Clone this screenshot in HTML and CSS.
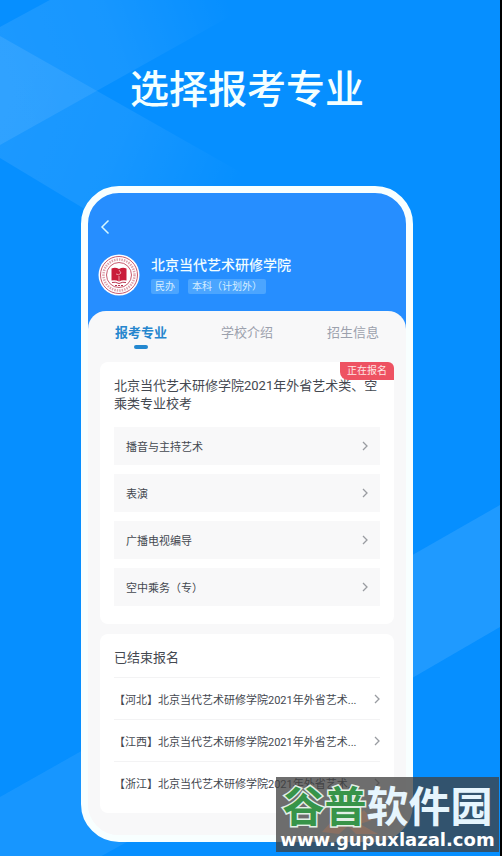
FILE: index.html
```html
<!DOCTYPE html>
<html lang="zh-CN">
<head>
<meta charset="utf-8">
<meta name="viewport" content="width=device-width, initial-scale=1">
<title>选择报考专业</title>
<link rel="stylesheet" href="styles.css">
</head>
<body>
<svg class="backdrop" viewBox="0 0 502 856" preserveAspectRatio="none" aria-hidden="true">
  <defs>
    <linearGradient id="up" gradientUnits="userSpaceOnUse" x1="0" y1="85" x2="230" y2="0"><stop offset="0" stop-color="#fff" stop-opacity=".09"/><stop offset=".5" stop-color="#fff" stop-opacity=".07"/><stop offset="1" stop-color="#fff" stop-opacity="0"/></linearGradient>
    <linearGradient id="down" gradientUnits="userSpaceOnUse" x1="0" y1="90" x2="240" y2="190"><stop offset="0" stop-color="#fff" stop-opacity=".09"/><stop offset=".5" stop-color="#fff" stop-opacity=".07"/><stop offset="1" stop-color="#fff" stop-opacity="0"/></linearGradient>
  </defs>
  <path fill="url(#up)" d="M0 27 50 0H260L0 145Z"/>
  <path fill="url(#down)" d="M0 36 280 194V260H170L0 158Z"/>
  <path fill="#fff" fill-opacity=".07" d="M0 797 160 707V824L102 856H0Z"/>
  <path fill="#fff" fill-opacity=".1" d="M502 505 400 563V686L502 627Z"/>
</svg>
<main class="poster">
  <h1 class="headline">选择报考专业</h1>
  <div class="phone">
    <header class="hero">
      <button class="back" type="button" aria-label="返回"><svg viewBox="0 0 10 16"><path d="M8.500 1.500 2 8l6.500 6.500"/></svg></button>
      <div class="school">
        <svg class="seal" viewBox="0 0 42 42" aria-hidden="true">
          <circle cx="21" cy="21" r="20.500" fill="#fff"/>
          <circle cx="21" cy="21" r="18.500" fill="none" stroke="#c85b70" stroke-width="1"/>
          <circle cx="21" cy="21" r="15.500" fill="none" stroke="#dfa3ae" stroke-width="2.500" stroke-dasharray="1.500 1"/>
          <circle cx="21" cy="21" r="12.500" fill="none" stroke="#c85b70" stroke-width="1"/>
          <path fill="#c91d3a" d="M13.500 14.500q4-1.500 7.500.5 3.500-2 7.500-.5v12q-4-1-7.500 1-3.500-2-7.500-1Z"/>
          <path fill="none" stroke="#f3b9c2" stroke-width=".8" d="M21 22v5M18 20q3 2 5-1l-2-3"/>
          <path fill="none" stroke="#b93450" stroke-width="1" d="M14 28.500q3-1 7 1 4-2 7-1M17 31.500h2m1 0h2m1 0h2"/>
        </svg>
        <div>
          <h2 class="school-name">北京当代艺术研修学院</h2>
          <div class="tags"><span class="tag">民办</span><span class="tag">本科（计划外）</span></div>
        </div>
      </div>
    </header>
    <div class="sheet">
      <nav class="tabs">
        <a class="tab active" href="#majors">报考专业</a>
        <a class="tab" href="#intro">学校介绍</a>
        <a class="tab" href="#info">招生信息</a>
      </nav>
      <section class="card" id="majors">
        <span class="status">正在报名</span>
        <h3 class="title">北京当代艺术研修学院2021年外省艺术类、空乘类专业校考</h3>
        <div class="majors">
          <button class="major" type="button">播音与主持艺术<svg class="chevron" viewBox="0 0 6 10"><path d="m1 1 4 4-4 4"/></svg></button>
          <button class="major" type="button">表演<svg class="chevron" viewBox="0 0 6 10"><path d="m1 1 4 4-4 4"/></svg></button>
          <button class="major" type="button">广播电视编导<svg class="chevron" viewBox="0 0 6 10"><path d="m1 1 4 4-4 4"/></svg></button>
          <button class="major" type="button">空中乘务（专）<svg class="chevron" viewBox="0 0 6 10"><path d="m1 1 4 4-4 4"/></svg></button>
        </div>
      </section>
      <section class="card ended">
        <h3 class="title">已结束报名</h3>
        <a class="row" href="#hebei"><span class="row-text">【河北】北京当代艺术研修学院2021年外省艺术...</span><svg class="chevron" viewBox="0 0 6 10"><path d="m1 1 4 4-4 4"/></svg></a>
        <a class="row" href="#jiangxi"><span class="row-text">【江西】北京当代艺术研修学院2021年外省艺术...</span><svg class="chevron" viewBox="0 0 6 10"><path d="m1 1 4 4-4 4"/></svg></a>
        <a class="row" href="#zhejiang"><span class="row-text">【浙江】北京当代艺术研修学院2021年外省艺术...</span><svg class="chevron" viewBox="0 0 6 10"><path d="m1 1 4 4-4 4"/></svg></a>
      </section>
    </div>
  </div>
</main>
<aside class="watermark">
  <svg class="watermark-mark" viewBox="0 0 80 36" aria-hidden="true"><path d="M0 30 18 10l12 9L42 8l8 10-12 4 18 10H34l-8-8-9 8Z"/></svg>
  <strong class="brand"><span class="brand-green">谷普</span>软件园</strong>
  <span class="site">www.gupuxlazal.com</span>
</aside>
</body>
</html>
```
FILE: styles.css
```css
* { box-sizing: border-box; }
body {
  position: relative;
  margin: 0;
  min-height: 100vh;
  overflow-x: hidden;
  background: #068fff;
  border-right: 2px solid #000;
  font-family: Roboto, "Noto Sans CJK SC", sans-serif;
  color: #444850;
}
h1, h2, h3 { margin: 0; font-weight: 400; }
button { border: 0; font: inherit; color: inherit; }
a { color: inherit; text-decoration: none; }
.backdrop { position: absolute; inset: 0; width: 100%; height: 100%; }
.poster { position: relative; padding: 60px 87px 14px 81px; }
.headline {
  margin-bottom: 66px;
  font-size: 39px;
  line-height: 60px;
  font-weight: 500;
  text-align: center;
  white-space: nowrap;
  color: #f4ffff;
}
.phone {
  border: 7px solid #f8ffff;
  border-radius: 38px;
  background: linear-gradient(#268eff 50%, #f8f8f9 50%);
  overflow: hidden;
}
.hero { padding: 24px 10px 15px; }
.back { display: block; padding: 2px; width: 14px; height: 20px; background: none; }
.back svg { display: block; width: 10px; height: 16px; fill: none; stroke: #d5f8ff; stroke-width: 1.500; }
.school { display: flex; gap: 11px; margin-top: 17px; }
.seal { flex: none; width: 42px; height: 42px; }
.school-name { font-size: 14px; line-height: 22px; font-weight: 500; color: #f0fcff; }
.tags { display: flex; gap: 9px; margin-top: 3px; }
.tag {
  padding: 0 4px;
  border-radius: 2px;
  background: #4ba5ff;
  font-size: 10px;
  line-height: 15px;
  color: #d5edff;
}
.sheet { padding: 0 12px 22px; border-radius: 18px 18px 0 0; background: #f8f8f9; }
.tabs { display: flex; justify-content: space-between; padding: 10px 15px 13px; }
.tab { display: flex; flex-direction: column; align-items: center; font-size: 13px; line-height: 24px; color: #9ca1ad; }
.tab::after { content: ""; width: 14px; height: 4px; border-radius: 2px; }
.active { font-weight: 700; color: #2686ce; }
.active::after { background: #2488d0; }
.card { position: relative; padding: 15px 14px 18px; border-radius: 8px; background: #fff; }
.title { font-size: 13px; line-height: 18px; }
.status {
  position: absolute;
  top: 0;
  right: 0;
  padding: 0 7px;
  border-radius: 0 6px 0 8px;
  background: #ee5262;
  font-size: 10px;
  line-height: 18px;
  color: #ffe6e5;
}
.majors { display: grid; gap: 9px; margin-top: 14px; }
.major {
  display: flex;
  align-items: center;
  justify-content: space-between;
  padding: 0 12px;
  height: 38px;
  background: #f8f8f9;
  font-size: 11px;
  text-align: left;
}
.chevron { flex: none; width: 6px; height: 10px; fill: none; stroke: #999ca1; stroke-width: 1.300; }
.ended { margin-top: 10px; padding-bottom: 10px; }
.ended .title { padding-bottom: 10px; }
.row { display: flex; align-items: center; justify-content: space-between; height: 42px; border-top: 1px solid #f3f3f4; font-size: 11px; }
.row-text { white-space: nowrap; }
.watermark {
  position: absolute;
  right: 1px;
  bottom: 4px;
  padding-top: 10px;
  width: 223px;
  height: 75px;
  background: rgba(64, 64, 64, .76);
  text-align: center;
  white-space: nowrap;
}
.watermark-mark { position: absolute; left: 46px; top: 25px; width: 80px; height: 36px; fill: #bd7853; opacity: .35; }
.brand {
  position: relative;
  display: block;
  font-size: 42px;
  line-height: 42px;
  font-weight: 700;
  color: #e6f5fd;
}
.brand-green { color: #379449; -webkit-text-stroke: 3px #e2efe6; paint-order: stroke fill; }
.site { position: relative; display: block; font-family: "DejaVu Sans", sans-serif; font-size: 18px; line-height: 22px; font-weight: 700; color: #fff; }
```
